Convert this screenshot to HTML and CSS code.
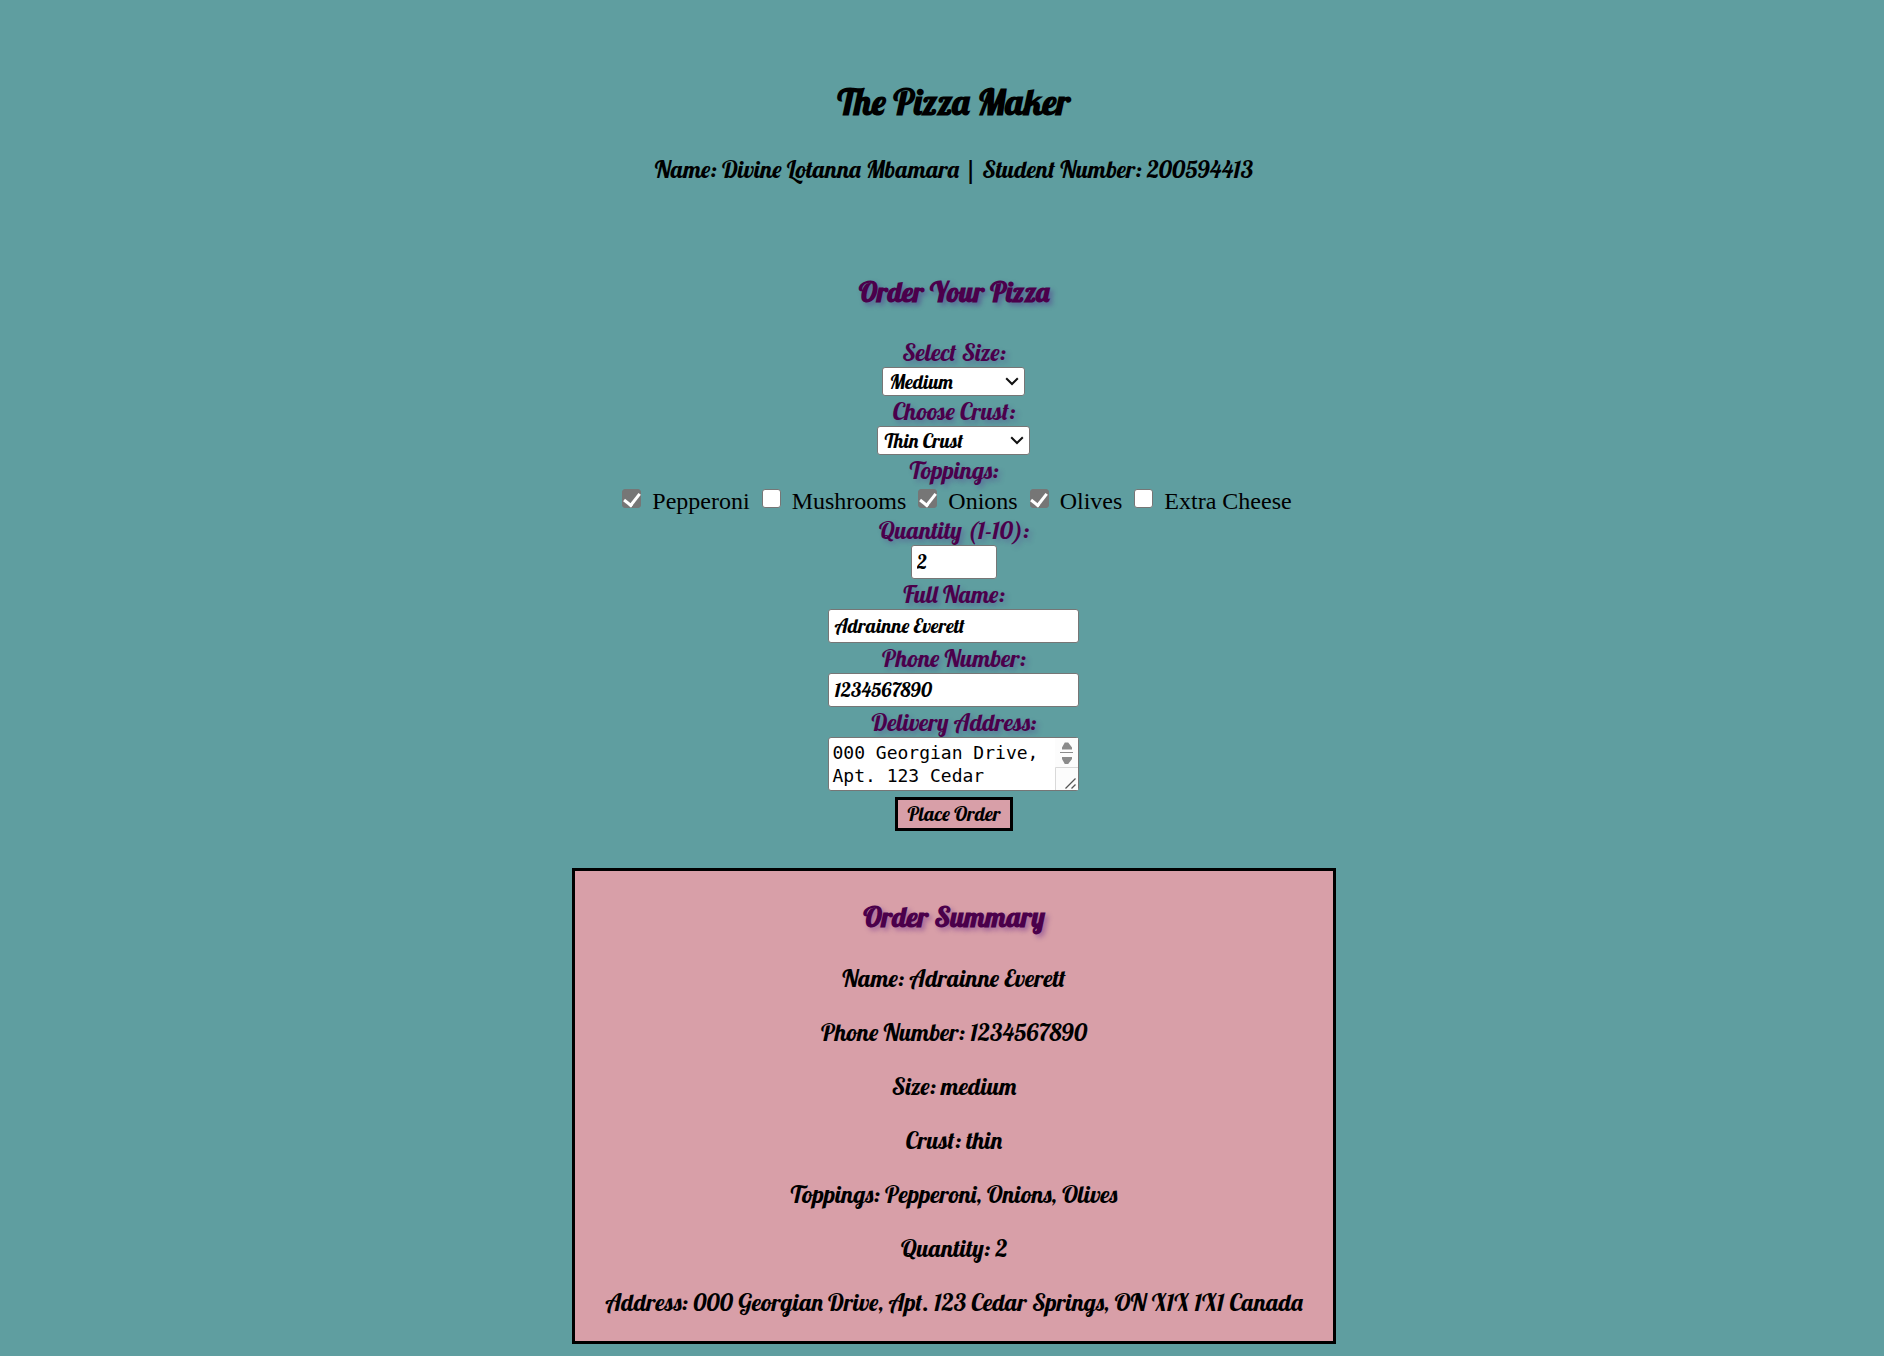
FILE: index.html
```html
<!DOCTYPE html>
<html lang="en">
<head>
<meta charset="utf-8">
<meta name="viewport" content="width=device-width, initial-scale=1">
<title>The Pizza Maker</title>
<link rel="stylesheet" href="styles.css">
</head>
<body>
<header class="header">
  <h1 class="title">The Pizza Maker</h1>
  <p class="line">Name: Divine Lotanna Mbamara | Student Number: 200594413</p>
</header>
<main class="main">
  <h2 class="heading">Order Your Pizza</h2>
  <form class="form">
    <label class="label" for="size">Select Size:</label>
    <div class="select-wrap size">
      <select class="control select" id="size"><option>Small</option><option selected>Medium</option><option>Large</option></select>
      <svg class="chevron" viewBox="0 0 14 9" aria-hidden="true"><path d="M1.2 1.2 7 7 12.8 1.2"/></svg>
    </div>
    <label class="label" for="crust">Choose Crust:</label>
    <div class="select-wrap crust">
      <select class="control select" id="crust"><option selected>Thin Crust</option><option>Thick Crust</option></select>
      <svg class="chevron" viewBox="0 0 14 9" aria-hidden="true"><path d="M1.2 1.2 7 7 12.8 1.2"/></svg>
    </div>
    <fieldset class="group">
      <legend class="label legend">Toppings:</legend>
      <div class="toppings">
        <label class="topping"><input class="check" type="checkbox" checked>Pepperoni</label>
        <label class="topping"><input class="check" type="checkbox">Mushrooms</label>
        <label class="topping"><input class="check" type="checkbox" checked>Onions</label>
        <label class="topping"><input class="check" type="checkbox" checked>Olives</label>
        <label class="topping"><input class="check" type="checkbox">Extra Cheese</label>
      </div>
    </fieldset>
    <label class="label" for="quantity">Quantity (1-10):</label>
    <input class="control field quantity" id="quantity" type="number" min="1" max="10" value="2">
    <label class="label" for="name">Full Name:</label>
    <input class="control field" id="name" type="text" value="Adrainne Everett">
    <label class="label" for="phone">Phone Number:</label>
    <input class="control field" id="phone" type="tel" value="1234567890">
    <label class="label" for="address">Delivery Address:</label>
    <div class="address-wrap">
      <textarea class="control address" id="address" rows="2">000 Georgian Drive, Apt. 123 Cedar Springs, ON X1X 1X1 Canada</textarea>
      <svg class="scroller" viewBox="0 0 23 52" aria-hidden="true">
        <path fill="#fcfcfc" d="M0 0h23v52H0z"/>
        <path fill="#8b8b8b" d="M9.800 4.500h3.400l3.800 5v2H7v-2zM7 19h10v2l-3.800 5H9.800L7 21z"/>
        <path stroke="#8b8b8b" d="M5 14.500h13"/>
        <path fill="none" stroke="#d9d9d9" d="M.5 52V29.500H23"/>
        <path stroke="#555" stroke-width="1.300" d="M10.500 50.500 20.500 40.500M16.500 50.500 20.500 46.500"/>
      </svg>
    </div>
    <button class="submit" type="button">Place Order</button>
  </form>
  <section class="summary">
    <h2 class="heading">Order Summary</h2>
    <p class="line">Name: Adrainne Everett</p>
    <p class="line">Phone Number: 1234567890</p>
    <p class="line">Size: medium</p>
    <p class="line">Crust: thin</p>
    <p class="line">Toppings: Pepperoni, Onions, Olives</p>
    <p class="line">Quantity: 2</p>
    <p class="line">Address: 000 Georgian Drive, Apt. 123 Cedar Springs, ON X1X 1X1 Canada</p>
  </section>
</main>
</body>
</html>
```
FILE: styles.css
```css
:root {
  --script: "Lobster", "Liberation Serif", serif;
  --plum: #4b004b;
  --pink: #d89fa8;
}

* { box-sizing: border-box; }

body {
  margin: 0;
  padding: 79px 0 12px 24px;
  background: #5f9ea0;
  color: #000;
  font: 24px/30px "Liberation Serif", serif;
  text-align: center;
}

h1, h2, p { margin: 0; }

.title, .heading, .line, .label, .control, .submit {
  font-family: var(--script);
  font-weight: normal;
}

.title, .heading { font-weight: bold; }

.title { font-size: 36px; line-height: 46px; }

.line { font-size: 24px; line-height: 30px; }

.header .line { margin-top: 29px; }

.main {
  display: flex;
  flex-direction: column;
  align-items: center;
  margin-top: 90px;
}

.heading {
  color: var(--plum);
  font-size: 28px;
  line-height: 36px;
  text-shadow: 3px 3px 5px rgba(75, 0, 130, .35);
}

.form {
  display: flex;
  flex-direction: column;
  align-items: center;
  margin-top: 27px;
}

.label {
  color: var(--plum);
  font-size: 24px;
  line-height: 30px;
  text-shadow: 3px 3px 5px rgba(75, 0, 130, .25);
}

.control {
  display: block;
  margin: 0;
  border: 1px solid #767676;
  border-radius: 3px;
  background: #fff;
  color: #000;
  font-size: 20px;
}

.select-wrap, .address-wrap { position: relative; }

.size { width: 143px; }
.crust { width: 153px; }

.select {
  width: 100%;
  height: 29px;
  padding: 0 6px;
  appearance: none;
}

.chevron {
  position: absolute;
  top: 10px;
  right: 6px;
  width: 14px;
  height: 9px;
  fill: none;
  stroke: #111;
  stroke-width: 2;
  pointer-events: none;
}

.group {
  min-width: 0;
  margin: 0;
  padding: 0;
  border: 0;
}

.legend {
  margin: 0 auto;
  padding: 0;
}

.toppings {
  display: flex;
  flex-wrap: wrap;
  justify-content: center;
  gap: 0 6px;
  line-height: 32px;
  margin-bottom: -2px;
}

.topping {
  display: flex;
  gap: 11px;
  padding-left: 6px;
}

.check {
  width: 19px;
  height: 19px;
  margin: 4px 0 0;
  border: 1px solid #767676;
  border-radius: 3px;
  background: #fff;
  appearance: none;
}

.check:checked {
  background: #767676;
}

.check:checked::before {
  content: "";
  display: block;
  width: 7px;
  height: 13px;
  margin: 0 auto;
  border: solid #fff;
  border-width: 0 3px 3px 0;
  transform: rotate(38deg);
}

.field {
  width: 251px;
  height: 34px;
  padding: 0 5px 2px;
}

.quantity {
  width: 86px;
  appearance: textfield;
}

.address {
  width: 251px;
  height: 54px;
  padding: 3px 24px 3px 3px;
  overflow: hidden;
  resize: none;
  font: 18px/23px "Consolas", "DejaVu Sans Mono", monospace;
}

.scroller {
  position: absolute;
  top: 1px;
  right: 1px;
  width: 23px;
  height: 52px;
}

.submit {
  height: 34px;
  margin-top: 6px;
  padding: 0 9px 2px;
  border: 3px solid #000;
  background: var(--pink);
  color: #000;
  font-size: 20px;
}

.summary {
  display: flex;
  flex-direction: column;
  gap: 24px;
  width: 100%;
  max-width: 764px;
  margin-top: 37px;
  padding: 28px 16px 24px;
  border: 3px solid #000;
  background: var(--pink);
}

.summary .heading { margin-bottom: 4px; }
```
